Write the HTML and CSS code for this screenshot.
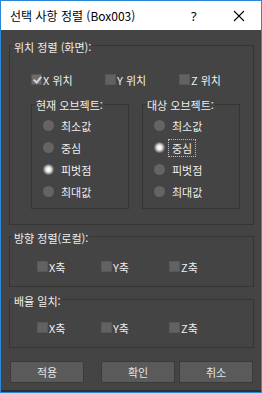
FILE: index.html
```html
<!DOCTYPE html>
<html lang="ko">
<head>
    <meta charset="UTF-8">
    <meta name="viewport" content="width=device-width, initial-scale=1.0">
    <title>선택 사항 정렬</title>
    <link rel="stylesheet" href="styles.css">
</head>
<body>

<div class="window">
    <div class="titlebar">
        <span class="title">선택 사항 정렬 (Box003)</span>
        <span class="help">?</span>
        <svg class="close" width="12" height="12" viewBox="0 0 12 12">
            <path d="M1 1 L11 11 M11 1 L1 11" stroke="#000" stroke-width="1.1" fill="none"/>
        </svg>
    </div>

    <div class="content">
        <div class="group group-pos">
            <div class="group-title">위치 정렬 (화면):</div>
            <div class="check-row pos-row">
                <div class="check checked"><span class="box"></span>X 위치</div>
                <div class="check"><span class="box"></span>Y 위치</div>
                <div class="check"><span class="box"></span>Z 위치</div>
            </div>

            <div class="sub-row">
                <div class="group sub">
                    <div class="group-title">현재 오브젝트:</div>
                    <div class="radio-list">
                        <div class="radio"><span class="dot"></span>최소값</div>
                        <div class="radio"><span class="dot"></span>중심</div>
                        <div class="radio on"><span class="dot"></span>피벗점</div>
                        <div class="radio"><span class="dot"></span>최대값</div>
                    </div>
                </div>
                <div class="group sub">
                    <div class="group-title">대상 오브젝트:</div>
                    <div class="radio-list">
                        <div class="radio"><span class="dot"></span>최소값</div>
                        <div class="radio on"><span class="dot"></span><span class="focus">중심</span></div>
                        <div class="radio"><span class="dot"></span>피벗점</div>
                        <div class="radio"><span class="dot"></span>최대값</div>
                    </div>
                </div>
            </div>
        </div>

        <div class="group group-dir">
            <div class="group-title">방향 정렬(로컬):</div>
            <div class="check-row axis-row">
                <div class="check"><span class="box"></span>X축</div>
                <div class="check"><span class="box"></span>Y축</div>
                <div class="check"><span class="box"></span>Z축</div>
            </div>
        </div>

        <div class="group group-scale">
            <div class="group-title">배율 일치:</div>
            <div class="check-row axis-row">
                <div class="check"><span class="box"></span>X축</div>
                <div class="check"><span class="box"></span>Y축</div>
                <div class="check"><span class="box"></span>Z축</div>
            </div>
        </div>

        <div class="buttons">
            <button type="button">적용</button>
            <button type="button" class="ok">확인</button>
            <button type="button">취소</button>
        </div>
    </div>
</div>

</body>
</html>
```

FILE: styles.css
```css
body {
    margin: 0;
    background-color: #444444;
    font-family: "Noto Sans CJK KR", "Noto Sans", sans-serif;
}

.window {
    width: 262px;
    height: 393px;
    box-sizing: border-box;
    border: 1px solid #2b88d8;
    display: flex;
    flex-direction: column;
    overflow: hidden;
}

.titlebar {
    height: 29px;
    background-color: #ffffff;
    display: flex;
    align-items: center;
    padding-left: 9px;
    flex-shrink: 0;
}

.title {
    font-size: 12px;
    color: #000000;
    width: 181px;
    line-height: 14px;
}

.help {
    font-family: "Noto Sans", sans-serif;
    font-size: 13px;
    color: #000000;
    width: 42px;
    line-height: 14px;
}

.close {
    display: block;
}

.content {
    flex: 1;
    background-color: #444444;
    padding: 15px 7px 0 8px;
    color: #eeeeee;
    font-size: 11px;
    line-height: 12px;
    border-bottom: 2px solid #2e2e2e;
}

.group {
    border: 1px solid #353535;
    box-sizing: border-box;
}

.group-title {
    width: fit-content;
    margin: -5px 0 0 3px;
    padding: 0 1px;
    background-color: #444444;
    height: 12px;
    white-space: nowrap;
}

.group-pos {
    height: 180px;
}

.group-dir {
    height: 51px;
    margin-top: 11px;
}

.group-scale {
    height: 49px;
    margin-top: 12px;
}

.check-row {
    display: flex;
    height: 11px;
    align-items: center;
}

.pos-row {
    margin-top: 21px;
    padding-left: 21px;
}

.pos-row .check {
    width: 75px;
}

.group-dir .axis-row {
    margin-top: 17px;
}

.group-scale .axis-row {
    margin-top: 15px;
}

.axis-row {
    padding-left: 27px;
}

.axis-row .check:nth-child(1) {
    width: 64px;
}

.axis-row .check:nth-child(2) {
    width: 68px;
}

.check {
    display: flex;
    align-items: center;
    white-space: nowrap;
}

.box {
    width: 11px;
    height: 11px;
    box-sizing: border-box;
    background-color: #626262;
    border: 1px solid #575757;
    margin-right: 1px;
    position: relative;
}

.checked .box {
    background-color: #6c6c6c;
}

.checked .box::after {
    content: "";
    position: absolute;
    left: 3px;
    top: 0px;
    width: 3px;
    height: 6px;
    border: solid #d4d4d4;
    border-width: 0 2px 2px 0;
    transform: rotate(40deg);
}

.sub-row {
    display: flex;
    margin-top: 19px;
    padding-left: 21px;
}

.sub {
    width: 98px;
    height: 105px;
}

.sub + .sub {
    margin-left: 13px;
}

.sub .group-title {
    margin-top: -6px;
}

.radio-list {
    margin-top: 9px;
    padding-left: 11px;
    display: flex;
    flex-direction: column;
    gap: 11px;
}

.radio {
    display: flex;
    align-items: center;
    height: 11px;
    white-space: nowrap;
}

.dot {
    width: 11px;
    height: 11px;
    border-radius: 50%;
    background-color: #646464;
    margin-right: 7px;
    flex-shrink: 0;
}

.radio.on .dot {
    background: radial-gradient(circle, #ffffff 0, #f4f4f4 2px, #b8b8b8 3.5px, #707070 5px, #646464 5.5px);
}

.focus {
    outline: 1px dotted #bdbdbd;
    outline-offset: 2px;
    padding: 0 1px;
    margin-left: -1px;
}

.buttons {
    display: flex;
    margin-top: 13px;
    padding-left: 1px;
}

button {
    width: 74px;
    height: 22px;
    background-color: #5a5a5a;
    border: 1px solid #3b3b3b;
    border-radius: 2px;
    color: #e6e6e6;
    font-family: "Noto Sans CJK KR", "Noto Sans", sans-serif;
    font-size: 11px;
    padding: 0;
}

button.ok {
    margin-left: 17px;
    margin-right: 4px;
}
```
